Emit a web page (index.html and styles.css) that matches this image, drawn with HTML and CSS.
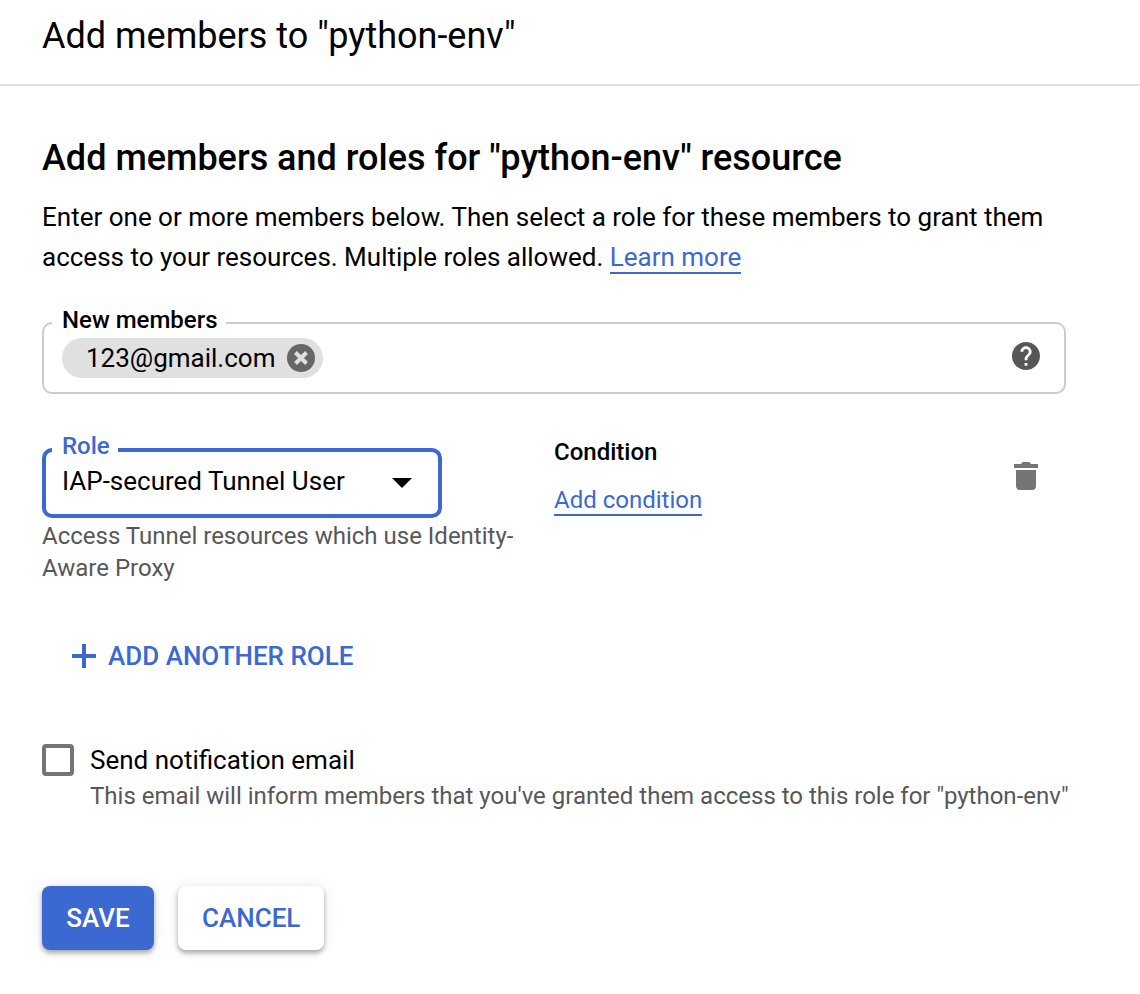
FILE: index.html
```html
<!DOCTYPE html>
<html lang="en">
<head>
<meta charset="utf-8">
<meta name="viewport" content="width=device-width, initial-scale=1">
<title>Add members to "python-env"</title>
<link rel="stylesheet" href="styles.css">
</head>
<body>
<header class="panel-header">
  <h1 class="panel-title">Add members to "python-env"</h1>
</header>
<main class="panel-body">
  <h2 class="section-title">Add members and roles for "python-env" resource</h2>
  <p class="intro">Enter one or more members below. Then select a role for these members to grant them access to your resources. Multiple roles allowed. <a class="link" href="#learn-more">Learn more</a></p>

  <form class="member-form">
    <div class="field members-field">
      <label class="field-label" for="members">New members</label>
      <span class="chip">123@gmail.com
        <button class="icon-button" type="button" aria-label="Remove 123@gmail.com">
          <svg width="28" height="28" viewBox="0 0 28 28" aria-hidden="true"><circle cx="14" cy="14" r="14" fill="#666"/><path d="M8.5 8.5l11 11M19.500 8.500l-11 11" stroke="#e0e0e0" stroke-width="4"/></svg>
        </button>
      </span>
      <input class="members-input" id="members" type="text">
      <button class="icon-button help" type="button" aria-label="Help">
        <svg width="28" height="28" viewBox="2 2 20 20" aria-hidden="true"><path fill="#575757" d="M12 2C6.480 2 2 6.480 2 12s4.480 10 10 10 10-4.480 10-10S17.520 2 12 2zm1 17h-2v-2h2v2zm2.070-7.750l-.9.920C13.450 12.900 13 13.500 13 15h-2v-.5c0-1.100.45-2.100 1.170-2.830l1.240-1.260c.37-.36.59-.86.59-1.410 0-1.100-.9-2-2-2s-2 .9-2 2H8c0-2.210 1.790-4 4-4s4 1.790 4 4c0 .88-.36 1.680-.93 2.250z"/></svg>
      </button>
    </div>

    <div class="role-row">
      <div class="role-column">
        <div class="field role-field">
          <label class="field-label" for="role">Role</label>
          <select class="role-select" id="role">
            <option>IAP-secured Tunnel User</option>
          </select>
          <svg class="role-arrow" width="20" height="10" viewBox="0 0 20 10" aria-hidden="true"><path d="M0 0h20L10 10z"/></svg>
        </div>
        <p class="hint">Access Tunnel resources which use Identity-Aware Proxy</p>
      </div>
      <div class="condition-column">
        <h3 class="condition-title">Condition</h3>
        <a class="link" href="#add-condition">Add condition</a>
      </div>
      <button class="icon-button delete-role" type="button" aria-label="Delete role">
        <svg width="24" height="28" viewBox="0 0 24 28" aria-hidden="true"><path fill="#757575" d="M0 2h7l1.500-2h7L17 2h7v4H0zM2 8h20v16a4 4 0 0 1-4 4H6a4 4 0 0 1-4-4z"/></svg>
      </button>
    </div>

    <button class="add-role" type="button">
      <svg width="24" height="24" viewBox="0 0 24 24" aria-hidden="true"><path fill="#3b69d1" d="M10 0h4v10h10v4H14v10h-4V14H0v-4h10z"/></svg>
      ADD ANOTHER ROLE
    </button>

    <div class="notify">
      <input class="notify-box" id="notify" type="checkbox" aria-describedby="notify-hint">
      <div class="notify-text">
        <label class="notify-label" for="notify">Send notification email</label>
        <p class="hint notify-hint" id="notify-hint">This email will inform members that you've granted them access to this role for "python-env"</p>
      </div>
    </div>

    <div class="actions">
      <button class="action action-primary" type="submit">SAVE</button>
      <button class="action" type="button">CANCEL</button>
    </div>
  </form>
</main>
</body>
</html>
```

FILE: styles.css
```css
* {
  box-sizing: border-box;
}

body {
  margin: 0;
  background: #fff;
  color: #000;
  font: 26px/40px Roboto, "Liberation Sans", sans-serif;
}

h1, h2, h3, p {
  margin: 0;
}

button, input, select {
  margin: 0;
  padding: 0;
  border: 0;
  background: none;
  color: inherit;
  font: inherit;
}

button {
  cursor: pointer;
}

svg {
  display: block;
}

.panel-header {
  padding: 12px 42px 24px;
  border-bottom: 2px solid #e0e0e0;
}

.panel-title {
  font-size: 36px;
  font-weight: 400;
  line-height: 48px;
}

.panel-body {
  padding: 48px 42px 40px;
}

.section-title {
  margin-bottom: 15px;
  font-size: 36px;
  font-weight: 500;
  line-height: 48px;
}

.link {
  border-bottom: 2px solid #3b69d1;
  color: #3b69d1;
  text-decoration: none;
}

.member-form {
  margin-top: 45px;
}

.field {
  position: relative;
  border-radius: 10px;
}

.field-label {
  position: absolute;
  left: 8px;
  padding: 0 8px 0 10px;
  background: #fff;
  font-size: 24px;
  font-weight: 500;
  line-height: 28px;
}

.members-field {
  display: flex;
  align-items: center;
  gap: 16px;
  height: 72px;
  margin-right: 32px;
  padding: 0 24px 0 18px;
  border: 2px solid #ccc;
}

.members-field .field-label {
  top: -18px;
}

.chip {
  display: flex;
  align-items: center;
  gap: 12px;
  height: 40px;
  padding: 0 8px 0 24px;
  border-radius: 20px;
  background: #e0e0e0;
}

.members-input {
  flex: 1;
  min-width: 0;
  outline: none;
}

.help {
  padding-bottom: 4px;
}

.role-row {
  display: flex;
  align-items: flex-start;
  margin-top: 54px;
}

.role-column {
  width: 512px;
}

.role-field {
  display: flex;
  align-items: center;
  width: 400px;
  height: 70px;
  border: 4px solid #3b69d1;
}

.role-field .field-label {
  top: -20px;
  left: 6px;
  color: #3b69d1;
}

.role-select {
  width: 100%;
  padding: 0 56px 4px 16px;
  appearance: none;
  outline: none;
}

.role-arrow {
  position: absolute;
  right: 26px;
  pointer-events: none;
}

.hint {
  color: #575757;
  font-size: 24px;
  line-height: 32px;
}

.role-column .hint {
  margin-top: 2px;
  padding-right: 32px;
}

.condition-column {
  flex: 1;
  margin-top: -12px;
  font-size: 24px;
  line-height: 32px;
}

.condition-title {
  margin-bottom: 16px;
  font-size: 24px;
  font-weight: 500;
}

.delete-role {
  margin: 14px 60px 0 0;
}

.add-role {
  display: flex;
  align-items: center;
  gap: 12px;
  margin-top: 52px;
  padding: 0 30px;
  color: #3b69d1;
  font-weight: 500;
}

.notify {
  display: flex;
  gap: 16px;
  margin-top: 64px;
}

.notify-box {
  flex: none;
  width: 32px;
  height: 32px;
  margin-top: 4px;
  border: 4px solid #757575;
  border-radius: 4px;
  appearance: none;
}

.notify-label {
  display: block;
}

.notify-hint {
  white-space: nowrap;
}

.actions {
  display: flex;
  gap: 24px;
  margin-top: 74px;
}

.action {
  min-width: 112px;
  height: 64px;
  padding: 0 24px;
  border-radius: 8px;
  background: #fff;
  box-shadow: 0 3px 5px rgba(0, 0, 0, 0.32), 0 0 16px rgba(0, 0, 0, 0.08);
  color: #3b69d1;
  font-weight: 500;
}

.action-primary {
  background: #3b69d1;
  color: #fff;
}
```
